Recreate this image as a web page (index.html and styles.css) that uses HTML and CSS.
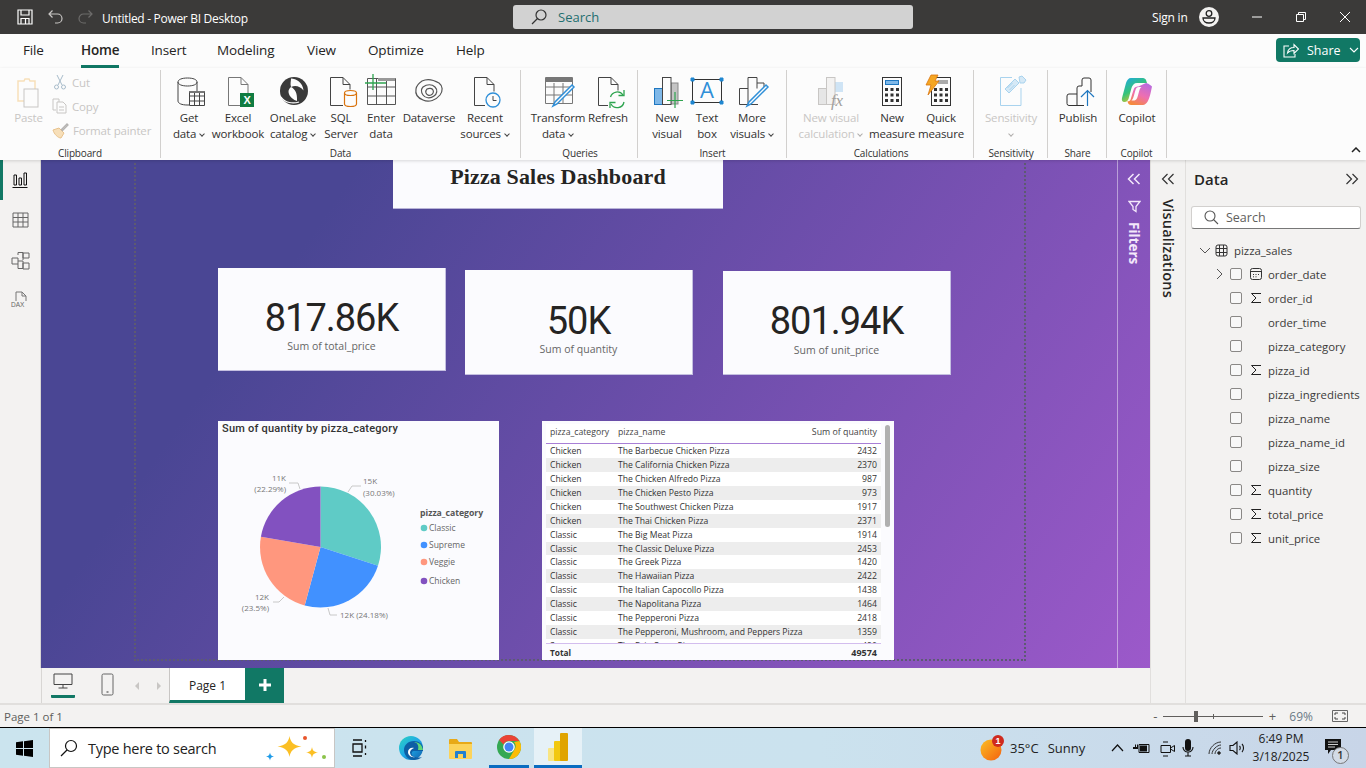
FILE: index.html
```html
<!DOCTYPE html>
<html lang="en">
<head>
  <meta charset="UTF-8">
  <meta name="viewport" content="width=device-width, initial-scale=1.0">
  <title>Untitled - Power BI Desktop</title>
  <link rel="stylesheet" href="styles.css">
</head>
<body>

  <!-- title bar -->
  <header class="titlebar">
    <div class="tb-left">
      <svg class="tb-save" width="16" height="16" viewBox="0 0 16 16" fill="none" stroke="#fff" stroke-width="1.2"><path d="M1 1h14v14H1zM4 1v5h8V1M4 15V9.500h8V15M8.500 9.500V15"/></svg>
      <svg class="tb-undo" width="15" height="16" viewBox="0 0 15 16" fill="none" stroke="#c8c6c4" stroke-width="1.2"><path d="M1 5h8.500a4.500 4.500 0 0 1 0 9H7M4.500 1.500 1 5l3.500 3.500"/></svg>
      <svg class="tb-redo" width="15" height="16" viewBox="0 0 15 16" fill="none" stroke="#6d6c6b" stroke-width="1.2"><path d="M14 5H5.500a4.500 4.500 0 0 0 0 9H8M10.500 1.500 14 5l-3.500 3.500"/></svg>
      <span class="tb-title">Untitled - Power BI Desktop</span>
    </div>
    <div class="tb-search">
      <svg width="16" height="16" viewBox="0 0 16 16" fill="none" stroke="#333" stroke-width="1.200"><circle cx="10" cy="6" r="5"/><path d="M6.500 9.500 1 15"/></svg>
      <span>Search</span>
    </div>
    <div class="tb-right">
      <span class="tb-signin">Sign in</span>
      <svg class="tb-avatar" width="20" height="20" viewBox="0 0 20 20"><circle cx="10" cy="10" r="10" fill="#f3f2f1"/><circle cx="10" cy="6.500" r="2.800" fill="none" stroke="#222" stroke-width="1.300"/><path d="M4 11h12c0 3-2.500 5-6 5s-6-2-6-5z" fill="none" stroke="#222" stroke-width="1.300"/></svg>
      <svg class="tb-win" width="12" height="12" viewBox="0 0 12 12" fill="none" stroke="#fff"><path d="M1 6h10"/></svg>
      <svg class="tb-win" width="12" height="12" viewBox="0 0 12 12" fill="none" stroke="#fff"><path d="M1.500 3.500h7v7h-7zM3.500 3.500v-2h7v7h-2"/></svg>
      <svg class="tb-win" width="12" height="12" viewBox="0 0 12 12" fill="none" stroke="#fff"><path d="M1 1l10 10M11 1 1 11"/></svg>
    </div>
  </header>

  <!-- ribbon tabs -->
  <nav class="tabs">
    <span class="tab tab-file">File</span>
    <span class="tab tab-home">Home</span>
    <span class="tab tab-insert">Insert</span>
    <span class="tab tab-modeling">Modeling</span>
    <span class="tab tab-view">View</span>
    <span class="tab tab-optimize">Optimize</span>
    <span class="tab tab-help">Help</span>
    <button class="share-btn">
      <svg width="16" height="15" viewBox="0 0 16 15" fill="none" stroke="#fff" stroke-width="1.100"><path d="M6 3H1v11h11v-3M4.500 10c.5-3.500 3-5.500 6.500-5.500V1.500L15.500 6 11 10.500V7.500c-3 0-5 .8-6.500 2.500z"/></svg>
      <span>Share</span>
      <svg width="10" height="6" viewBox="0 0 10 6" fill="none" stroke="#fff" stroke-width="1.100"><path d="M1 1l4 4 4-4"/></svg>
    </button>
  </nav>

  <!-- ribbon -->
  <section class="ribbon">

    <div class="group g-clipboard">
      <div class="clip-row">
        <div class="rb rb-off paste">
          <svg class="rb-ico" width="40" height="34" viewBox="0 0 40 34" fill="none"><path d="M9 6h6l1-2h4l1 2h5v20H9z" stroke="#f7dfb9" stroke-width="1.500"/><rect x="15" y="14" width="14" height="18" fill="#fcfcfc" stroke="#c8c6c4"/></svg>
          <span>Paste</span>
        </div>
        <div class="clip-small">
          <div class="small-item">
            <svg width="16" height="16" viewBox="0 0 16 16" fill="none" stroke="#a8bccb"><path d="M5 1l5 10M11 1 6 11"/><circle cx="4.500" cy="13" r="2"/><circle cx="11.500" cy="13" r="2"/></svg>
            <span>Cut</span>
          </div>
          <div class="small-item">
            <svg width="16" height="16" viewBox="0 0 16 16" fill="none" stroke="#c8c6c4"><path d="M1 1h6v3M1 1v11h3"/><path d="M5 4h6l3 3v8H5zM7 9h5M7 12h5"/></svg>
            <span>Copy</span>
          </div>
          <div class="small-item">
            <svg width="17" height="17" viewBox="0 0 17 17" fill="none"><path d="M1 8l6-2 5 5-3 5c-3 0-7-4-8-8z" fill="#f7dfb9" stroke="#e8c28c"/><path d="M9 8l6-6 1 1-6 6" stroke="#b5b3b1" stroke-width="1.300"/></svg>
            <span>Format painter</span>
          </div>
        </div>
      </div>
      <div class="group-label">Clipboard</div>
    </div>

    <div class="group g-data">
      <div class="rb-row">
        <div class="rb">
          <svg class="rb-ico" width="40" height="34" viewBox="0 0 40 34" fill="none" stroke="#444"><path d="M9 7v19c0 2.500 4 4 9 4h2M28 7v9M9 7c0-2.500 4-4 9.500-4S28 4.500 28 7s-4 4-9.500 4S9 9.500 9 7z"/><path d="M20.500 16.500h15v14h-15zM20.500 21h15M20.500 26h15M25.500 16.500v14M30.500 16.500v14" stroke-width="1"/><path d="M20.500 17h15" stroke="#777" stroke-width="2"/></svg>
          <span>Get</span><span>data <i class="chev"></i></span>
        </div>
        <div class="rb">
          <svg class="rb-ico" width="40" height="34" viewBox="0 0 40 34" fill="none"><path d="M22 30.500H10.500v-28H23l7 7V18M23 2.500v7h7" stroke="#777"/><rect x="22" y="18" width="14" height="14" fill="#107c41"/><text x="29" y="29" class="xl-x">X</text></svg>
          <span>Excel</span><span>workbook</span>
        </div>
        <div class="rb">
          <svg class="rb-ico" width="40" height="34" viewBox="0 0 40 34" fill="none"><circle cx="21" cy="16" r="14" fill="#3a3a3a"/><path d="M18 3.500c5 0 12 4 12.500 12-3-4-8-5.500-12.500-3.500-1-3 0-6 0-8.500zM18 12c4 2 6.500 6 6 14-3-1-8-4-8.500-9-.1-2 1-4 2.500-5z" fill="#fcfcfc"/><path d="M8 22c4 6 12 7 18 5" stroke="#fcfcfc" stroke-width="1.200"/></svg>
          <span>OneLake</span><span>catalog <i class="chev"></i></span>
        </div>
        <div class="rb">
          <svg class="rb-ico" width="40" height="34" viewBox="0 0 40 34" fill="none"><path d="M22 30.500H9.500v-28H22l7 7v5M22 2.500v7h7" stroke="#444"/><path d="M23.500 18v11c0 1.500 2.800 2.500 6 2.500s6-1 6-2.500V18M23.500 18c0-1.500 2.800-2.500 6-2.500s6 1 6 2.500-2.800 2.500-6 2.500-6-1-6-2.500z" stroke="#d9730d" stroke-width="1.200"/></svg>
          <span>SQL</span><span>Server</span>
        </div>
        <div class="rb">
          <svg class="rb-ico" width="40" height="34" viewBox="0 0 40 34" fill="none"><path d="M6.500 3.500h28v26h-28zM6.500 12h28M6.500 21h28M15.500 3.500v26M25.500 3.500v26" stroke="#555"/><path d="M17 4.500h17" stroke="#999" stroke-width="3"/><path d="M4 8h21M12 -1v16" stroke="#2ea44f" stroke-width="1.300"/></svg>
          <span>Enter</span><span>data</span>
        </div>
        <div class="rb">
          <svg class="rb-ico" width="40" height="34" viewBox="0 0 40 34" fill="none" stroke="#555" stroke-width="1.200"><path d="M13 6c6-3 12-1 17 2 4 3 4 8 1 12-4 5-11 8-17 5-5-2-8-6-7-11 .5-3 3-6 6-8z"/><path d="M14 12c4-3 9-3 12 0 3 3 2 7-1 9-4 3-9 2-11-1-2-3-2-6 0-8z"/><path d="M18 14c2-1 5-1 6 1 1 2 0 4-2 5-2 1-4 0-5-2-.5-1.500 0-3 1-4z"/></svg>
          <span>Dataverse</span>
        </div>
        <div class="rb">
          <svg class="rb-ico" width="40" height="34" viewBox="0 0 40 34" fill="none"><path d="M20 30.500H9.500v-28H22l7 7v7M22 2.500v7h7" stroke="#444"/><circle cx="28" cy="25" r="7" fill="#fcfcfc" stroke="#2f8fd8" stroke-width="1.300"/><path d="M28 21v4.500h3.500" stroke="#444"/></svg>
          <span>Recent</span><span>sources <i class="chev"></i></span>
        </div>
      </div>
      <div class="group-label">Data</div>
    </div>

    <div class="group g-queries">
      <div class="rb-row">
        <div class="rb">
          <svg class="rb-ico" width="40" height="34" viewBox="0 0 40 34" fill="none"><path d="M7.500 2.500h27v26h-27zM7.500 12h27M7.500 20h27M16 8v20M25 8v20" stroke="#777"/><path d="M8 5h26" stroke="#777" stroke-width="4"/><path d="M36 12 19 29l-4 2 2-4L34 10z" fill="#fcfcfc" stroke="#2f8fd8" stroke-width="1.500"/></svg>
          <span>Transform</span><span>data <i class="chev"></i></span>
        </div>
        <div class="rb">
          <svg class="rb-ico" width="40" height="34" viewBox="0 0 40 34" fill="none"><path d="M20 30.500H10.500v-28H23l7 7v6M23 2.500v7h7" stroke="#444"/><path d="M22.500 22a7 7 0 0 1 12.500-2M36 27a7 7 0 0 1-13 2" stroke="#2ea44f" stroke-width="1.300"/><path d="M36 15v5.500h-5.500M22 33v-5.500h5.500" stroke="#2ea44f" stroke-width="1.300"/></svg>
          <span>Refresh</span>
        </div>
      </div>
      <div class="group-label">Queries</div>
    </div>

    <div class="group g-insert">
      <div class="rb-row">
        <div class="rb">
          <svg class="rb-ico" width="40" height="34" viewBox="0 0 40 34" fill="none"><rect x="7.500" y="13.500" width="8" height="16" fill="#7fb8e8" stroke="#1f77c0"/><rect x="24" y="8" width="7" height="21" fill="#c4c4c4" stroke="#888"/><rect x="15.500" y="2.500" width="8.500" height="27" fill="#fcfcfc" stroke="#444"/><path d="M20 25.500h16M28 17v16" stroke="#2ea44f" stroke-width="1.200"/></svg>
          <span>New</span><span>visual</span>
        </div>
        <div class="rb">
          <svg class="rb-ico" width="40" height="34" viewBox="0 0 40 34" fill="none"><rect x="5.500" y="4.500" width="29" height="23" stroke="#333"/><path d="M4 3h3v3H4zM33 3h3v3h-3zM4 26h3v3H4zM33 26h3v3h-3z" fill="#1f86d0" stroke="#1f86d0"/><text x="20" y="23" class="tb-a">A</text></svg>
          <span>Text</span><span>box</span>
        </div>
        <div class="rb">
          <svg class="rb-ico" width="40" height="34" viewBox="0 0 40 34" fill="none" stroke="#444"><path d="M16 13.500H7.500v16H26M16 29.500v-27h9v11M25 8h7v6"/><path d="M36 12 19 29l-4 2 2-4L34 10z" fill="#fcfcfc" stroke="#2f8fd8" stroke-width="1.500"/></svg>
          <span>More</span><span>visuals <i class="chev"></i></span>
        </div>
      </div>
      <div class="group-label">Insert</div>
    </div>

    <div class="group g-calc">
      <div class="rb-row">
        <div class="rb rb-off">
          <svg class="rb-ico" width="40" height="34" viewBox="0 0 40 34" fill="none"><rect x="7.500" y="13.500" width="8" height="16" fill="#e6e6e6" stroke="#c8c6c4"/><rect x="24" y="7" width="8" height="10" fill="#cfe4f5"/><rect x="15.500" y="2.500" width="8.500" height="27" fill="#f3f2f1" stroke="#c8c6c4"/><text x="20" y="31" class="fx">fx</text></svg>
          <span>New visual</span><span>calculation <i class="chev"></i></span>
        </div>
        <div class="rb">
          <svg class="rb-ico" width="40" height="34" viewBox="0 0 40 34" fill="none"><rect x="10.500" y="2.500" width="19" height="28" stroke="#333"/><rect x="13.500" y="5.500" width="13" height="4" fill="#7fb8e8" stroke="#1f77c0"/><path d="M13 13h3v3h-3zM18.500 13h3v3h-3zM24 13h3v3h-3zM13 18.500h3v3h-3zM18.500 18.500h3v3h-3zM24 18.500h3v3h-3zM13 24h3v3h-3zM18.500 24h3v3h-3zM24 24h3v3h-3z" fill="#333"/></svg>
          <span>New</span><span>measure</span>
        </div>
        <div class="rb">
          <svg class="rb-ico" width="40" height="34" viewBox="0 0 40 34" fill="none"><rect x="10.500" y="2.500" width="19" height="28" stroke="#333"/><rect x="17" y="5" width="10" height="4" fill="#aaa"/><path d="M13 13h3v3h-3zM18.500 13h3v3h-3zM24 13h3v3h-3zM13 18.500h3v3h-3zM18.500 18.500h3v3h-3zM24 18.500h3v3h-3zM13 24h3v3h-3zM18.500 24h3v3h-3zM24 24h3v3h-3z" fill="#333"/><path d="M10 0h7l-3 6h4L7 20l3-10H5z" fill="#f5a623" stroke="#d9730d" stroke-width=".8"/></svg>
          <span>Quick</span><span>measure</span>
        </div>
      </div>
      <div class="group-label">Calculations</div>
    </div>

    <div class="group g-sens">
      <div class="rb-row">
        <div class="rb rb-off">
          <svg class="rb-ico" width="40" height="34" viewBox="0 0 40 34" fill="none"><path d="M21 2.500H9.500v28H30V13" stroke="#a9d3ee"/><path d="M14 14 24 4l4 4-10 10zM28 2l3-1 4 4-2 3-4 0z" fill="#d6e9f6" stroke="#a9d3ee"/><path d="M16.500 13l5-5M18.500 15l5-5" stroke="#a9d3ee"/></svg>
          <span>Sensitivity</span><span><i class="chev"></i></span>
        </div>
      </div>
      <div class="group-label">Sensitivity</div>
    </div>

    <div class="group g-share">
      <div class="rb-row">
        <div class="rb">
          <svg class="rb-ico" width="40" height="34" viewBox="0 0 40 34" fill="none"><path d="M26 30.500H11a2 2 0 0 1-2-2V21a2 2 0 0 1 2-2h8M19 30V13a2 2 0 0 1 2-2h3V5a2 2 0 0 1 2-2h5a2 2 0 0 1 2 2v12" stroke="#333"/><path d="M29.500 31V16M23 22l6.500-6.500L36 22" stroke="#1f77c0" stroke-width="1.200"/></svg>
          <span>Publish</span>
        </div>
      </div>
      <div class="group-label">Share</div>
    </div>

    <div class="group g-copilot">
      <div class="rb-row">
        <div class="rb">
          <svg class="rb-ico" width="40" height="34" viewBox="0 0 40 34">
            <defs>
              <linearGradient id="cpA" x1="0" y1="0" x2=".6" y2="1"><stop offset="0" stop-color="#1ea7e8"/><stop offset=".55" stop-color="#35c37a"/><stop offset="1" stop-color="#f5c518"/></linearGradient>
              <linearGradient id="cpB" x1=".8" y1="0" x2=".3" y2="1"><stop offset="0" stop-color="#b76be0"/><stop offset=".55" stop-color="#ee6fb0"/><stop offset="1" stop-color="#f58a3c"/></linearGradient>
            </defs>
            <path d="M14 3h12c1.500 0 2.500 1 3 2l1 3H20c-3 0-4.500 2-5.500 5l-3 11c-.8 2-2 3-4 3-2.500 0-3-2-2.500-4L9 8c1-3 2.500-5 5-5z" fill="url(#cpA)"/>
            <path d="M26 30H14c-1.500 0-2.500-1-3-2l-.6-2c1 .4 2 .3 3-1 .6-1 3-11 4-12 1-1 2-1.500 4-1.500L29 8c.4 0 1.800 0 6 3.500l-1.500 7C32 25 29.500 30 26 30z" fill="url(#cpB)"/>
            <path d="M22 12c-2 0-3 1-3.500 3l-2 7c-.5 1.500-1 2.500-2 3.500h3c1.500-.5 2.500-1.500 3-3.500l2-7c.5-1.500 1-2.500 2-3z" fill="#fcfcfc"/>
          </svg>
          <span>Copilot</span>
        </div>
      </div>
      <div class="group-label">Copilot</div>
    </div>

    <svg class="ribbon-collapse" width="10" height="6" viewBox="0 0 10 6" fill="none" stroke="#222" stroke-width="1.500"><path d="M1 5l4-4 4 4"/></svg>
  </section>

  <!-- main area -->
  <main class="workspace">
    <div class="report-col">
      <div class="report-top">
        <aside class="rail">
          <div class="rail-item rail-on">
            <svg width="16" height="16" viewBox="0 0 16 16" fill="none" stroke="#111"><path d="M.5 15.500h15M2 13V3h2.500v10zM7 13V6h2.500v7zM12 13V1h2.500v12z"/></svg>
          </div>
          <div class="rail-item">
            <svg width="17" height="16" viewBox="0 0 17 16" fill="none" stroke="#666"><path d="M1 1h15v14H1zM1 5.500h15M1 10h15M6 1v14M11 1v14"/></svg>
          </div>
          <div class="rail-item">
            <svg width="19" height="19" viewBox="0 0 19 19" fill="none" stroke="#666"><path d="M1 7h6v6H1zM7 4V1.500h5V9M7 10h5v7.500H7V13M12 2h6v5h-6zM12 12h6v6h-6z"/></svg>
          </div>
          <div class="rail-item">
            <svg width="18" height="18" viewBox="0 0 18 18" fill="none"><path d="M5 10V1h6l4 4v5" stroke="#777"/><path d="M11 1v4h4" stroke="#777"/><text x="0" y="16" class="dax">DAX</text></svg>
          </div>
        </aside>

        <div class="canvas">
          <div class="page-frame"></div>

          <div class="visual title-card">Pizza Sales Dashboard</div>

          <div class="visual kpi kpi-1"><div class="kpi-value">817.86K</div><div class="kpi-label">Sum of total_price</div></div>
          <div class="visual kpi kpi-2"><div class="kpi-value">50K</div><div class="kpi-label">Sum of quantity</div></div>
          <div class="visual kpi kpi-3"><div class="kpi-value">801.94K</div><div class="kpi-label">Sum of unit_price</div></div>

          <div class="visual pie-card">
            <div class="pie-title">Sum of quantity by pizza_category</div>
            <svg class="pie-svg" width="281" height="239" viewBox="0 0 281 239">
              <path d="M102.500 126V65.500A60.500 60.500 0 0 1 160 144.800z" fill="#5fcbc6"/>
              <path d="M102.500 126 160 144.800A60.500 60.500 0 0 1 86.700 184.400z" fill="#4191ff"/>
              <path d="M102.500 126 86.700 184.400A60.500 60.500 0 0 1 42.900 115.750z" fill="#ff977e"/>
              <path d="M102.500 126 42.900 115.750A60.500 60.500 0 0 1 102.500 65.500z" fill="#8251c0"/>
              <g fill="none" stroke="#c8c8c8">
                <path d="M130 71l4-6h9M82 68l-2-6h-9M66 176l-5 5h-6M110 187l2 7h7"/>
              </g>
              <g class="pie-lbl">
                <text x="145" y="63">15K</text>
                <text x="145" y="75">(30.03%)</text>
                <text x="68" y="60" text-anchor="end">11K</text>
                <text x="68" y="71" text-anchor="end">(22.29%)</text>
                <text x="51" y="179" text-anchor="end">12K</text>
                <text x="51" y="190" text-anchor="end">(23.5%)</text>
                <text x="122" y="197">12K (24.18%)</text>
              </g>
              <text x="202" y="95" class="leg-title">pizza_category</text>
              <circle cx="206" cy="107" r="3.300" fill="#5fcbc6"/><text x="211" y="110" class="leg-item">Classic</text>
              <circle cx="206" cy="124" r="3.300" fill="#4191ff"/><text x="211" y="127" class="leg-item">Supreme</text>
              <circle cx="206" cy="141" r="3.300" fill="#ff977e"/><text x="211" y="144" class="leg-item">Veggie</text>
              <circle cx="206" cy="160" r="3.300" fill="#8251c0"/><text x="211" y="163" class="leg-item">Chicken</text>
            </svg>
          </div>

          <div class="visual table-card">
            <div class="tbl">
              <div class="tbl-head"><span class="c1">pizza_category</span><span class="c2">pizza_name</span><span class="c3">Sum of quantity</span></div>
              <div class="tbl-body">
                <div class="tbl-row"><span class="c1">Chicken</span><span class="c2">The Barbecue Chicken Pizza</span><span class="c3">2432</span></div>
                <div class="tbl-row"><span class="c1">Chicken</span><span class="c2">The California Chicken Pizza</span><span class="c3">2370</span></div>
                <div class="tbl-row"><span class="c1">Chicken</span><span class="c2">The Chicken Alfredo Pizza</span><span class="c3">987</span></div>
                <div class="tbl-row"><span class="c1">Chicken</span><span class="c2">The Chicken Pesto Pizza</span><span class="c3">973</span></div>
                <div class="tbl-row"><span class="c1">Chicken</span><span class="c2">The Southwest Chicken Pizza</span><span class="c3">1917</span></div>
                <div class="tbl-row"><span class="c1">Chicken</span><span class="c2">The Thai Chicken Pizza</span><span class="c3">2371</span></div>
                <div class="tbl-row"><span class="c1">Classic</span><span class="c2">The Big Meat Pizza</span><span class="c3">1914</span></div>
                <div class="tbl-row"><span class="c1">Classic</span><span class="c2">The Classic Deluxe Pizza</span><span class="c3">2453</span></div>
                <div class="tbl-row"><span class="c1">Classic</span><span class="c2">The Greek Pizza</span><span class="c3">1420</span></div>
                <div class="tbl-row"><span class="c1">Classic</span><span class="c2">The Hawaiian Pizza</span><span class="c3">2422</span></div>
                <div class="tbl-row"><span class="c1">Classic</span><span class="c2">The Italian Capocollo Pizza</span><span class="c3">1438</span></div>
                <div class="tbl-row"><span class="c1">Classic</span><span class="c2">The Napolitana Pizza</span><span class="c3">1464</span></div>
                <div class="tbl-row"><span class="c1">Classic</span><span class="c2">The Pepperoni Pizza</span><span class="c3">2418</span></div>
                <div class="tbl-row"><span class="c1">Classic</span><span class="c2">The Pepperoni, Mushroom, and Peppers Pizza</span><span class="c3">1359</span></div>
                <div class="tbl-row"><span class="c1">Supreme</span><span class="c2">The Brie Carre Pizza</span><span class="c3">490</span></div>
              </div>
              <div class="tbl-total"><span class="c1">Total</span><span class="c3">49574</span></div>
            </div>
            <div class="tbl-scroll"></div>
          </div>

          <div class="filters-strip">
            <svg width="14" height="12" viewBox="0 0 14 12" fill="none" stroke="#f3e8fb" stroke-width="1.500"><path d="M6.500 1 1.500 6l5 5M12.500 1l-5 5 5 5"/></svg>
            <svg class="filter-ico" width="13" height="13" viewBox="0 0 13 13" fill="none" stroke="#f3e8fb" stroke-width="1.300"><path d="M1 1.500h11L8 6.500v5l-3-2v-3z"/></svg>
            <span class="strip-text">Filters</span>
          </div>
        </div>
      </div>

      <div class="page-tabs">
        <div class="view-btn view-on">
          <svg width="20" height="16" viewBox="0 0 20 16" fill="none" stroke="#444"><path d="M1 1h18v10.500H1zM10 11.500V15M5.500 15h9"/></svg>
        </div>
        <div class="view-btn">
          <svg width="13" height="23" viewBox="0 0 13 23" fill="none" stroke="#666"><rect x="1" y="1" width="11" height="21" rx="1.500"/><path d="M5.500 19h2" stroke="#333"/></svg>
        </div>
        <span class="page-arrows"><i class="arr-l"></i><i class="arr-r"></i></span>
        <div class="page-tab">Page 1</div>
        <div class="page-add">
          <svg width="12" height="12" viewBox="0 0 12 12" fill="none" stroke="#fff" stroke-width="3"><path d="M6 0v12M0 6h12"/></svg>
        </div>
      </div>
    </div>

    <aside class="viz-pane">
      <svg width="14" height="12" viewBox="0 0 14 12" fill="none" stroke="#333" stroke-width="1.200"><path d="M6.500 1 1.500 6l5 5M12.500 1l-5 5 5 5"/></svg>
      <span class="viz-text">Visualizations</span>
    </aside>

    <aside class="data-pane">
      <div class="data-head">
        <span>Data</span>
        <svg width="14" height="12" viewBox="0 0 14 12" fill="none" stroke="#333" stroke-width="1.200"><path d="M1.500 1l5 5-5 5M7.500 1l5 5-5 5"/></svg>
      </div>
      <div class="data-search">
        <svg width="15" height="15" viewBox="0 0 15 15" fill="none" stroke="#555" stroke-width="1.100"><circle cx="6" cy="6" r="5"/><path d="M9.500 9.500 14 14"/></svg>
        <span>Search</span>
      </div>
      <ul class="tree">
        <li class="tree-table">
          <svg class="tw" width="12" height="7" viewBox="0 0 12 7" fill="none" stroke="#555"><path d="M1 1l5 5 5-5"/></svg>
          <svg class="ti" width="13" height="13" viewBox="0 0 13 13" fill="none" stroke="#333"><rect x="1" y="1" width="11" height="11" rx="2"/><path d="M1 4.500h11M1 8.500h11M4.500 1v11M8.500 1v11"/></svg>
          <span>pizza_sales</span>
        </li>
        <li class="field"><svg class="fx-tw" width="7" height="12" viewBox="0 0 7 12" fill="none" stroke="#555"><path d="M1 1l5 5-5 5"/></svg><i class="chk"></i><svg class="fi" width="12" height="12" viewBox="0 0 12 12" fill="none" stroke="#333"><rect x=".5" y=".5" width="11" height="11" rx="2"/><path d="M.5 3.500h11M3 6.500h1M5.500 6.500h1M8 6.500h1M3 8.800h1M5.500 8.800h1"/></svg><span>order_date</span></li>
        <li class="field"><i class="chk"></i><svg class="fi" width="12" height="12" viewBox="0 0 12 12" fill="none" stroke="#222"><path d="M11 1.500H1.500L6 6l-4.500 4.500H11"/></svg><span>order_id</span></li>
        <li class="field"><i class="chk"></i><b class="nosig"></b><span>order_time</span></li>
        <li class="field"><i class="chk"></i><b class="nosig"></b><span>pizza_category</span></li>
        <li class="field"><i class="chk"></i><svg class="fi" width="12" height="12" viewBox="0 0 12 12" fill="none" stroke="#222"><path d="M11 1.500H1.500L6 6l-4.500 4.500H11"/></svg><span>pizza_id</span></li>
        <li class="field"><i class="chk"></i><b class="nosig"></b><span>pizza_ingredients</span></li>
        <li class="field"><i class="chk"></i><b class="nosig"></b><span>pizza_name</span></li>
        <li class="field"><i class="chk"></i><b class="nosig"></b><span>pizza_name_id</span></li>
        <li class="field"><i class="chk"></i><b class="nosig"></b><span>pizza_size</span></li>
        <li class="field"><i class="chk"></i><svg class="fi" width="12" height="12" viewBox="0 0 12 12" fill="none" stroke="#222"><path d="M11 1.500H1.500L6 6l-4.500 4.500H11"/></svg><span>quantity</span></li>
        <li class="field"><i class="chk"></i><svg class="fi" width="12" height="12" viewBox="0 0 12 12" fill="none" stroke="#222"><path d="M11 1.500H1.500L6 6l-4.500 4.500H11"/></svg><span>total_price</span></li>
        <li class="field"><i class="chk"></i><svg class="fi" width="12" height="12" viewBox="0 0 12 12" fill="none" stroke="#222"><path d="M11 1.500H1.500L6 6l-4.500 4.500H11"/></svg><span>unit_price</span></li>
      </ul>
    </aside>
  </main>

  <!-- status bar -->
  <footer class="statusbar">
    <span class="status-page">Page 1 of 1</span>
    <div class="zoom">
      <span class="z-minus">-</span>
      <div class="z-track"><i class="z-tick"></i><i class="z-thumb"></i></div>
      <span class="z-plus">+</span>
      <span class="z-pct">69%</span>
      <svg class="z-fit" width="16" height="12" viewBox="0 0 16 12" fill="none" stroke="#666"><path d="M.5.500h15v11H.5z"/><path d="M3 5V3h3M13 5V3h-3M3 7v2h3M13 7v2h-3" stroke="#444"/></svg>
    </div>
  </footer>

  <!-- windows taskbar -->
  <div class="taskbar">
    <svg class="win-logo" width="17" height="17" viewBox="0 0 17 17" fill="#000"><path d="M0 2.300 7 1.300v6.800H0zM8 1.200 17 0v8.100H8zM0 9h7v6.800l-7-1zM8 9h9v8l-9-1.200z"/></svg>
    <div class="task-search">
      <svg width="18" height="18" viewBox="0 0 18 18" fill="none" stroke="#111" stroke-width="1.200"><circle cx="11" cy="7" r="5.500"/><path d="M7 11 1 17"/></svg>
      <span>Type here to search</span>
      <svg class="sparkle" width="64" height="26" viewBox="0 0 64 26">
        <path d="M25.500 0c1 6 4 9.500 12 10.500-8 1-11 4.500-12 10.500-1-6-4-9.500-12-10.500 8-1 11-4.500 12-10.500z" fill="#fbbf24"/>
        <path d="M48 11c.5 3 1.500 5 6 5.500-4.500.5-5.500 2.500-6 5.500-.5-3-1.500-5-6-5.500 4.500-.5 5.500-2.500 6-5.500z" fill="#fbbf24"/>
        <path d="M6 16.500c.4 2.500 1.200 3.500 4 4-2.800.5-3.600 1.500-4 4-.4-2.500-1.200-3.500-4-4 2.800-.5 3.600-1.500 4-4z" fill="#1e9be8"/>
        <circle cx="41" cy="2" r="2" fill="#e8552c"/><circle cx="60" cy="21" r="2" fill="#8bc34a"/>
      </svg>
    </div>
    <div class="task-apps">
      <div class="task-app task-view">
        <svg width="16" height="18" viewBox="0 0 16 18" fill="none" stroke="#111" stroke-width="1.300"><path d="M1 1h9M1 17h9M1 5h9v8H1zM13.500 1v2M13.500 6.500v3M13.500 14v2"/></svg>
      </div>
      <div class="task-app task-edge">
        <svg width="24" height="24" viewBox="0 0 24 24"><defs><linearGradient id="edgeA" x1="0" y1="0" x2="1" y2="1"><stop offset="0" stop-color="#2dd4bf"/><stop offset=".5" stop-color="#1ea7e8"/><stop offset="1" stop-color="#0f5ea8"/></linearGradient></defs><circle cx="12" cy="12" r="12" fill="url(#edgeA)"/><path d="M24 13c0-5-4-8-9-8-6 0-10 4-10 9 0 5 4 10 10 10 3 0 6-1 8-3-3 1-8 1-10-2-1-2 0-4 2-4h9z" fill="#0d5fa5"/><path d="M24 14c-1-6-5-8-9-8 4 1 5 4 4 8z" fill="#5fd87a"/><path d="M15 12c-3-1-6 1-6 4 0 3 3 6 7 5-3 0-5-2-5-4.500S13 13 15 12z" fill="#fff"/></svg>
      </div>
      <div class="task-app task-files">
        <svg width="23" height="21" viewBox="0 0 23 21"><path d="M0 2a1 1 0 0 1 1-1h7l2 3h12a1 1 0 0 1 1 1v3H0z" fill="#e8a917"/><path d="M0 6h23v14a1 1 0 0 1-1 1H1a1 1 0 0 1-1-1z" fill="#fcd35a"/><path d="M6 20v-6a1 1 0 0 1 1-1h9a1 1 0 0 1 1 1v6h-3v-4H9v4z" fill="#2280d0"/></svg>
      </div>
      <div class="task-app task-chrome task-run">
        <svg width="24" height="24" viewBox="0 0 24 24"><circle cx="12" cy="12" r="12" fill="#34a853"/><path d="M12 0a12 12 0 0 1 10.400 6H12a6 6 0 0 0-5.500 3.600L2.100 5A12 12 0 0 1 12 0z" fill="#ea4335"/><path d="M22.400 6A12 12 0 0 1 12 24l5.200-9A6 6 0 0 0 17 7z" fill="#fbbc05"/><circle cx="12" cy="12" r="5.800" fill="#fff"/><circle cx="12" cy="12" r="4.500" fill="#4285f4"/></svg>
      </div>
      <div class="task-app task-pbi task-active">
        <svg width="20" height="28" viewBox="0 0 20 28"><rect x="0" y="15" width="8" height="13" rx="1" fill="#f9e583"/><rect x="6" y="8" width="8" height="20" rx="1" fill="#f2c811"/><rect x="12" y="0" width="8" height="28" rx="1" fill="#e0a400"/></svg>
      </div>
    </div>
    <div class="tray">
      <div class="weather">
        <svg width="26" height="28" viewBox="0 0 26 28"><defs><linearGradient id="sunA" x1="0" y1="0" x2="1" y2="1"><stop offset="0" stop-color="#fbbf24"/><stop offset="1" stop-color="#f4610f"/></linearGradient></defs><circle cx="11" cy="16" r="10.500" fill="url(#sunA)"/><circle cx="18" cy="7" r="6" fill="#cf2a1e"/><text x="18" y="10" class="w-badge">1</text></svg>
        <span class="w-temp">35°C</span>
        <span class="w-sky">Sunny</span>
      </div>
      <svg class="t-caret" width="13" height="8" viewBox="0 0 13 8" fill="none" stroke="#111" stroke-width="1.200"><path d="M1 7l5.500-6L12 7"/></svg>
      <svg class="t-batt" width="17" height="12" viewBox="0 0 17 12" fill="#111"><path d="M6 2.500h10v8H6z" fill="none" stroke="#111"/><path d="M7 3.500h7v6H7zM0 5h5v2H0zM2 2.500h1V5H2zM4 2.500h1V5H4z"/></svg>
      <svg class="t-cam" width="16" height="17" viewBox="0 0 16 17" fill="none" stroke="#111"><path d="M1 5.500h9.500v7H1zM10.500 8l4-2.500v6l-4-2.500M3 2h5M3 16h5"/></svg>
      <svg class="t-mic" width="12" height="18" viewBox="0 0 12 18"><rect x="3" y="0" width="6" height="12" rx="3" fill="#111"/><path d="M1 8c0 3 2 5 5 5s5-2 5-5M6 13v4M3 17h6" fill="none" stroke="#111" stroke-width="1.100"/></svg>
      <svg class="t-wifi" width="14" height="14" viewBox="0 0 14 14" fill="none" stroke="#333"><path d="M1 13C1 7 7 1 13 1M4 13c0-4 5-9 9-9M7 13c0-3 3-6 6-6"/><circle cx="11" cy="12" r="1.300" fill="#111"/></svg>
      <svg class="t-spk" width="16" height="14" viewBox="0 0 16 14" fill="none" stroke="#111" stroke-width="1.100"><path d="M1 4.500h3L8 1v12L4 9.500H1zM10.500 5c1 1 1 3 0 4M13 3c2 2 2 6 0 8"/></svg>
      <div class="clock"><span>6:49 PM</span><span>3/18/2025</span></div>
      <div class="notif">
        <svg width="16" height="15" viewBox="0 0 16 15" fill="#111"><path d="M0 0h16v11H6l-3 4v-4H0z"/><path d="M3 3h10M3 5.500h10M3 8h7" stroke="#fff" stroke-width=".8"/></svg>
        <span class="notif-num">1</span>
      </div>
    </div>
  </div>

</body>
</html>
```

FILE: styles.css
```css
* {
  box-sizing: border-box;
}

html, body {
  margin: 0;
  padding: 0;
}

body {
  width: 1366px;
  height: 768px;
  overflow: hidden;
  display: flex;
  flex-direction: column;
  font-family: "Open Sans", "Noto Sans", sans-serif;
  font-size: 12px;
  color: #252423;
  background-color: #f3f2f1;
}

svg {
  display: block;
  flex: none;
}

/* title bar */
.titlebar {
  height: 34px;
  flex: none;
  background-color: #3b3a39;
  color: #fff;
  display: flex;
  align-items: center;
  position: relative;
}

.tb-left {
  display: flex;
  align-items: center;
  padding-left: 17px;
  width: 513px;
  flex: none;
}

.tb-undo {
  margin-left: 15px;
}

.tb-redo {
  margin-left: 15px;
}

.tb-title {
  margin-left: 9px;
  font-size: 12px;
  letter-spacing: -0.3px;
  margin-top: 3px;
}

.tb-search {
  width: 400px;
  height: 24px;
  flex: none;
  background-color: #d2d2d2;
  border-radius: 3px;
  display: flex;
  align-items: center;
  padding-left: 18px;
  gap: 11px;
  font-size: 13px;
  color: #1f6f70;
}

.tb-right {
  flex: 1;
  display: flex;
  align-items: center;
  padding-left: 239px;
}

.tb-signin {
  width: 47px;
  font-size: 12px;
  letter-spacing: -0.2px;
}

.tb-avatar {
  margin-left: 0;
  margin-right: 32px;
}

.tb-win {
  margin-right: 32px;
}

/* tabs */
.tabs {
  height: 34px;
  flex: none;
  background-color: #fcfcfc;
  position: relative;
  font-size: 13.5px;
}

.tab {
  position: absolute;
  top: 7px;
  line-height: 19px;
  letter-spacing: -0.15px;
}

.tab-file { left: 23px; }
.tab-home { left: 81px; font-weight: 600; padding-bottom: 5px; border-bottom: 3px solid #117865; }
.tab-insert { left: 151px; }
.tab-modeling { left: 217px; }
.tab-view { left: 307px; }
.tab-optimize { left: 368px; }
.tab-help { left: 456px; }

.share-btn {
  position: absolute;
  left: 1276px;
  top: 4px;
  width: 84px;
  height: 24px;
  border: none;
  border-radius: 4px;
  background-color: #117865;
  color: #fff;
  font-family: inherit;
  font-size: 12.5px;
  display: flex;
  align-items: center;
  padding: 0 0 0 7px;
  gap: 8px;
}

/* ribbon */
.ribbon {
  height: 92px;
  flex: none;
  background-color: #fcfcfc;
  display: flex;
  position: relative;
  box-shadow: 0 1px 3px rgba(0, 0, 0, 0.15);
  z-index: 2;
  font-size: 11.5px;
  letter-spacing: -0.15px;
}

.group {
  display: flex;
  flex-direction: column;
  justify-content: space-between;
  height: 88px;
  margin-top: 2px;
  border-right: 1px solid #d2d0ce;
  padding-top: 5px;
}

.group-label {
  text-align: center;
  font-size: 10px;
  line-height: 14px;
  color: #323130;
  margin-bottom: -2px;
}

.rb-row {
  display: grid;
}

.g-clipboard { width: 161px; }
.g-data { width: 360px; padding-left: 7px; }
.g-queries { width: 117px; padding-left: 9px; }
.g-insert { width: 149px; padding-left: 9px; }
.g-calc { width: 187px; padding-left: 10px; }
.g-sens { width: 74px; padding-left: 7px; }
.g-share { width: 59px; padding-left: 8px; }
.g-copilot { width: 60px; padding-left: 7px; }

.g-data .group-label { padding-right: 7px; }
.g-queries .group-label { padding-right: 7px; }
.g-insert .group-label { padding-right: 8px; }
.g-calc .group-label { padding-right: 8px; }
.g-sens .group-label { padding-right: 6px; }
.g-share .group-label { padding-right: 7px; }
.g-copilot .group-label { padding-right: 7px; }

.g-data .rb-row { grid-template-columns: 42px 56px 54px 42px 38px 58px 54px; }
.g-queries .rb-row { grid-template-columns: 56px 44px; }
.g-insert .rb-row { grid-template-columns: 40px 40px 50px; }
.g-calc .rb-row { grid-template-columns: 68px 54px 44px; }
.g-sens .rb-row { grid-template-columns: 60px; }
.g-share .rb-row { grid-template-columns: 44px; }
.g-copilot .rb-row { grid-template-columns: 46px; }

.rb {
  display: flex;
  flex-direction: column;
  align-items: center;
  white-space: nowrap;
  line-height: 16px;
  color: #323130;
}

.rb-ico {
  width: 40px;
  height: 34px;
  overflow: visible;
  margin-bottom: 1px;
}

.rb-off {
  color: #c8c6c4;
}

.chev {
  display: inline-block;
  width: 4px;
  height: 4px;
  border-right: 1px solid #444;
  border-bottom: 1px solid #444;
  transform: rotate(45deg);
  margin: 0 1px 2px 1px;
}

.rb-off .chev {
  border-color: #b0aeac;
}

.clip-row {
  display: flex;
}

.paste {
  width: 52px;
  padding-left: 5px;
}

.clip-small {
  display: flex;
  flex-direction: column;
  gap: 8px;
  color: #c8c6c4;
  margin-top: -1px;
}

.small-item {
  display: flex;
  align-items: center;
  gap: 4px;
  height: 16px;
}

.ribbon-collapse {
  position: absolute;
  left: 1351px;
  top: 79px;
}

/* svg text */
.xl-x {
  fill: #fff;
  font-size: 11px;
  font-weight: 700;
  text-anchor: middle;
  font-family: "Liberation Sans", sans-serif;
}

.tb-a {
  fill: #2f8fd8;
  font-size: 22px;
  text-anchor: middle;
  font-family: "Open Sans", sans-serif;
}

.fx {
  fill: #a19f9d;
  font-size: 17px;
  font-style: italic;
  font-family: "Liberation Serif", serif;
}

.dax {
  fill: #666;
  font-size: 6.500px;
  font-family: "Liberation Sans", sans-serif;
}

.w-badge {
  fill: #fff;
  font-size: 9px;
  font-weight: 700;
  text-anchor: middle;
  font-family: "Liberation Sans", sans-serif;
}

/* main area */
.workspace {
  height: 543px;
  flex: none;
  display: flex;
}

.report-col {
  width: 1150px;
  flex: none;
  display: flex;
  flex-direction: column;
}

.report-top {
  height: 508px;
  display: flex;
}

.rail {
  width: 41px;
  flex: none;
  border-right: 1px solid #d8d6d4;
}

.rail-item {
  height: 40px;
  display: flex;
  align-items: center;
  justify-content: center;
  padding-right: 0;
}

.rail-on {
  border-left: 3px solid #117865;
  padding-right: 3px;
}

.canvas {
  flex: 1;
  position: relative;
  overflow: hidden;
  background: linear-gradient(125deg, #4a4694 0%, #4a4694 22%, #9c59ca 100%);
}

.page-frame {
  position: absolute;
  left: 93px;
  top: -2px;
  width: 892px;
  height: 503px;
  border: 2px dotted #5d5a72;
}

.visual {
  position: absolute;
  background-color: #fbfbfe;
}

.title-card {
  left: 352px;
  top: 0;
  width: 330px;
  height: 49px;
  border-bottom: 1px solid #b9b4d8;
  font-family: "Liberation Serif", serif;
  font-weight: 700;
  font-size: 22px;
  text-align: center;
  line-height: 33px;
  letter-spacing: 0.14px;
  color: #252423;
}

.kpi {
  display: flex;
  flex-direction: column;
  align-items: center;
  width: 228px;
  border-bottom: 1px solid #c4bfe0;
  border-right: 1px solid #c4bfe0;
}

.kpi-1 { left: 177px; top: 108px; height: 103px; padding-top: 27px; }
.kpi-2 { left: 424px; top: 110px; height: 105px; padding-top: 28px; }
.kpi-3 { left: 682px; top: 111px; height: 104px; padding-top: 27px; }

.kpi-value {
  font-family: "Roboto", sans-serif;
  font-size: 38px;
  line-height: 46px;
  letter-spacing: -1px;
  color: #252423;
}

.kpi-label {
  font-size: 10.5px;
  line-height: 14px;
  margin-top: -2px;
  color: #666;
}

.kpi-3 .kpi-label {
  margin-top: -1px;
}

.pie-card {
  left: 177px;
  top: 261px;
  width: 281px;
  height: 239px;
}

.pie-title {
  position: absolute;
  left: 4px;
  top: 0;
  font-family: "Roboto", sans-serif;
  font-weight: 500;
  font-size: 11px;
  line-height: 15px;
  letter-spacing: 0.22px;
  color: #333;
}

.pie-lbl text {
  font-family: "Open Sans", sans-serif;
  font-size: 8px;
  fill: #777;
}

.leg-title {
  font-family: "Open Sans", sans-serif;
  font-size: 8.7px;
  font-weight: 700;
  fill: #555;
}

.leg-item {
  font-family: "Open Sans", sans-serif;
  font-size: 8.5px;
  fill: #666;
}

.table-card {
  left: 501px;
  top: 261px;
  width: 352px;
  height: 239px;
}

.tbl {
  position: absolute;
  left: 4px;
  top: 3px;
  width: 335px;
  height: 236px;
  font-size: 8.6px;
  color: #333;
  display: flex;
  flex-direction: column;
}

.tbl-head {
  height: 20px;
  flex: none;
  background-color: #fff;
  display: flex;
  align-items: center;
  padding-bottom: 4px;
  border-bottom: 1px solid #a87fd6;
  color: #444;
  font-size: 8.7px;
}

.tbl-body {
  height: 199px;
  flex: none;
  overflow: hidden;
}

.tbl-row {
  height: 14px;
  display: flex;
  align-items: center;
  background-color: #fff;
}

.tbl-row:nth-child(even) {
  background-color: #ededed;
}

.tbl-row:nth-child(8) {
  height: 13px;
}

.c1 {
  width: 72px;
  padding-left: 4px;
  flex: none;
}

.c2 {
  flex: 1;
  white-space: nowrap;
}

.c3 {
  margin-left: auto;
  padding-right: 4px;
  font-size: 8.7px;
}

.tbl-head .c3 {
  font-size: 8.8px;
}

.tbl-total {
  height: 17px;
  flex: none;
  display: flex;
  align-items: center;
  border-top: 1px solid #d3bdee;
  font-weight: 700;
  font-size: 8.3px;
}

.tbl-total .c3 {
  font-size: 9px;
}

.tbl-scroll {
  position: absolute;
  left: 343px;
  top: 4px;
  width: 5px;
  height: 102px;
  border-radius: 3px;
  background-color: #b0b0b0;
}

.filters-strip {
  position: absolute;
  right: 0;
  top: 0;
  bottom: 0;
  width: 33px;
  border-left: 1px solid rgba(255, 255, 255, 0.45);
  display: flex;
  flex-direction: column;
  align-items: center;
  padding-top: 13px;
}

.filter-ico {
  margin-top: 15px;
}

.strip-text {
  writing-mode: vertical-rl;
  font-weight: 700;
  font-size: 13.5px;
  color: #f3e8fb;
  margin-top: 9px;
}

/* page tabs */
.page-tabs {
  height: 35px;
  display: flex;
  align-items: stretch;
  padding-left: 41px;
  position: relative;
}

.page-tabs::before {
  content: "";
  position: absolute;
  left: 41px;
  top: 0;
  bottom: 0;
  border-left: 1px solid #d8d6d4;
}

.view-btn {
  display: flex;
  align-items: flex-start;
  justify-content: center;
  padding-top: 5px;
}

.view-btn:first-child {
  margin-left: 10px;
  width: 24px;
  height: 30px;
}

.view-on {
  border-bottom: 3px solid #117865;
  border-radius: 1px;
}

.view-btn:nth-child(2) {
  margin-left: 20px;
  width: 24px;
}

.page-arrows {
  width: 50px;
  position: relative;
}

.arr-l, .arr-r {
  position: absolute;
  top: 14px;
  width: 0;
  height: 0;
  border-top: 4px solid transparent;
  border-bottom: 4px solid transparent;
}

.arr-l { left: 16px; border-right: 4px solid #c8c6c4; }
.arr-r { left: 38px; border-left: 4px solid #c8c6c4; }

.page-tab {
  width: 76px;
  background-color: #fff;
  border-left: 1px solid #c8c6c4;
  border-bottom: 3px solid #117865;
  text-align: center;
  line-height: 35px;
  font-size: 12px;
  color: #252423;
  margin-left: 0;
}

.page-add {
  width: 39px;
  background-color: #117865;
  display: flex;
  align-items: center;
  justify-content: center;
  padding-bottom: 2px;
}

/* side panes */
.viz-pane {
  width: 36px;
  flex: none;
  border-left: 1px solid #e1dfdd;
  border-right: 1px solid #e1dfdd;
  display: flex;
  flex-direction: column;
  align-items: center;
  padding-top: 13px;
}

.viz-text {
  writing-mode: vertical-rl;
  font-weight: 600;
  font-size: 14.5px;
  letter-spacing: 0.2px;
  color: #252423;
  margin-top: 14px;
  margin-left: 1px;
}

.data-pane {
  flex: 1;
  min-width: 0;
  padding: 0 5px;
}

.data-head {
  display: flex;
  align-items: center;
  justify-content: space-between;
  height: 37px;
  padding: 0 2px 0 3px;
  font-size: 15px;
  font-weight: 600;
  color: #252423;
}

.data-search {
  height: 23px;
  margin-top: 9px;
  background-color: #fff;
  border: 1px solid #d2d0ce;
  border-bottom: 1px solid #777;
  border-radius: 3px;
  display: flex;
  align-items: center;
  padding-left: 12px;
  gap: 7px;
  color: #605e5c;
  font-size: 12.5px;
  width: 170px;
}

.tree {
  list-style: none;
  margin: 9px 0 0;
  padding: 0;
}

.tree li {
  height: 24px;
  display: flex;
  align-items: center;
  font-size: 11.4px;
  color: #3b3a39;
  white-space: nowrap;
}

.tree-table .tw {
  margin-left: 8px;
}

.tree-table .ti {
  margin-left: 4px;
  margin-right: 6px;
}

.field {
  padding-left: 39px;
  position: relative;
}

.fx-tw {
  position: absolute;
  left: 25px;
  top: 6px;
}

.chk {
  width: 12px;
  height: 12px;
  border: 1px solid #8a8886;
  border-radius: 2px;
  flex: none;
  background-color: #f8f8f8;
}

.fi {
  margin-left: 8px;
  margin-right: 6px;
}

.nosig {
  width: 12px;
  margin-left: 8px;
  margin-right: 6px;
}

/* status bar */
.statusbar {
  height: 24px;
  flex: none;
  border-top: 2px solid #e1dfdd;
  display: flex;
  align-items: center;
  justify-content: space-between;
  padding-left: 4px;
  font-size: 11.5px;
  color: #605e5c;
}

.zoom {
  display: flex;
  align-items: center;
  padding-right: 18px;
}

.z-minus, .z-plus {
  font-size: 13px;
  width: 10px;
  text-align: center;
}

.z-track {
  width: 100px;
  height: 1px;
  background-color: #605e5c;
  margin: 0 4px 0 3px;
  position: relative;
}

.z-tick {
  position: absolute;
  left: 50px;
  top: -2px;
  width: 1px;
  height: 5px;
  background-color: #605e5c;
}

.z-thumb {
  position: absolute;
  left: 31px;
  top: -5px;
  width: 4px;
  height: 11px;
  background-color: #605e5c;
}

.z-pct {
  margin-left: 12px;
  font-size: 12px;
  color: #6b7a86;
}

.z-fit {
  margin-left: 19px;
}

/* taskbar */
.taskbar {
  height: 41px;
  flex: none;
  border-top: 1px solid #000;
  background: linear-gradient(90deg, #cbe4ee 0%, #cbe2ee 60%, #c8d5e8 100%);
  display: flex;
  align-items: center;
  position: relative;
}

.win-logo {
  margin-left: 16px;
}

.task-search {
  width: 286px;
  height: 40px;
  margin-left: 16px;
  background-color: #fff;
  border: 1px solid #c8c6c4;
  display: flex;
  align-items: center;
  padding-left: 10px;
  gap: 10px;
  font-size: 14.5px;
  letter-spacing: -0.27px;
  color: #222;
  position: relative;
}

.sparkle {
  position: absolute;
  left: 214px;
  top: 7px;
}

.task-apps {
  display: flex;
  height: 40px;
  position: relative;
}

.task-app {
  display: flex;
  align-items: center;
  justify-content: center;
  height: 40px;
}

.task-view { width: 48px; padding-left: 2px; }
.task-edge { width: 48px; margin-left: 1px; padding-left: 6px; }
.task-files { width: 49px; margin-left: 2px; padding-left: 3px; }
.task-chrome { width: 40px; margin-left: 6px; }
.task-pbi { width: 48px; margin-left: 5px; }

.task-run {
  border-bottom: 3px solid #0a6cc0;
}

.task-active {
  border-bottom: 3px solid #0a6cc0;
  background-color: #e6f1f7;
}

.tray {
  display: flex;
  align-items: center;
  position: absolute;
  left: 980px;
  top: 0;
  height: 40px;
}

.weather {
  display: flex;
  align-items: center;
  font-size: 13px;
  color: #222;
  width: 131px;
}

.w-temp {
  margin-left: 4px;
}

.w-sky {
  margin-left: 9px;
}

.t-batt { margin-left: 9px; }
.t-cam { margin-left: 10px; }
.t-mic { margin-left: 6px; }
.t-wifi { margin-left: 14px; }
.t-spk { margin-left: 7px; }

.clock {
  display: flex;
  flex-direction: column;
  align-items: center;
  width: 74px;
  margin-left: -1px;
  font-size: 12px;
  line-height: 18px;
  color: #222;
}

.notif {
  position: relative;
  margin-left: 7px;
  width: 30px;
  height: 30px;
  padding-top: 6px;
}

.notif-num {
  position: absolute;
  left: 7px;
  top: 14px;
  width: 17px;
  height: 17px;
  border-radius: 50%;
  border: 1.500px solid #777;
  background-color: #d3dbe6;
  text-align: center;
  line-height: 14px;
  font-size: 11px;
  font-weight: 600;
  color: #333;
}
```
